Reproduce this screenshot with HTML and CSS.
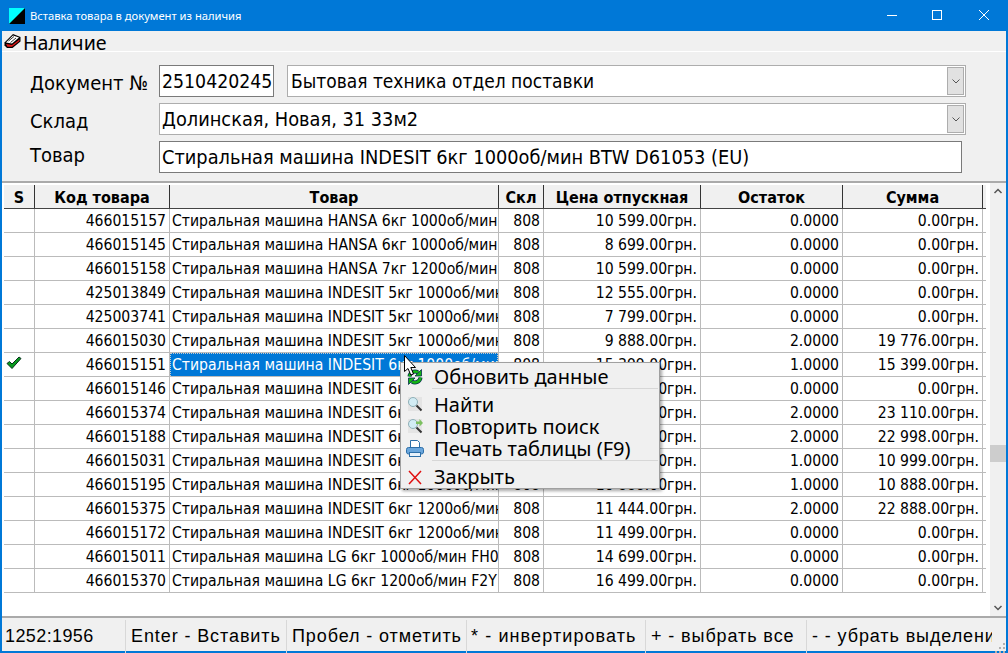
FILE: index.html
```html
<!DOCTYPE html>
<html lang="ru">
<head>
<meta charset="utf-8">
<title>Вставка товара в документ из наличия</title>
<link rel="stylesheet" href="styles.css">
</head>
<body>
<div class="window">
  <header class="titlebar">
    <svg class="app-icon" width="16" height="16" viewBox="0 0 16 16"><rect width="16" height="16" fill="#000"/><path d="M0 0H16L0 16Z" fill="#0ff"/></svg>
    <span class="title">Вставка товара в документ из наличия</span>
    <div class="controls">
      <svg width="46" height="31" viewBox="0 0 46 31"><path d="M18 15.5H28" stroke="#fff"/></svg>
      <svg width="46" height="31" viewBox="0 0 46 31"><rect x="17.5" y="10.5" width="9" height="9" fill="none" stroke="#fff"/></svg>
      <svg width="46" height="31" viewBox="0 0 46 31"><path d="M18 10L28 20M28 10L18 20" stroke="#fff"/></svg>
    </div>
  </header>
  <nav class="menubar">
    <svg width="17" height="16" viewBox="0 0 17 16"><path d="M0.5 9.5L9 1L16.5 4V8.5L8.5 15H3L0.5 12.5Z" fill="#000"/><path d="M2 9.5L9 2.5L15 4.5L8 10.5Z" fill="#fff"/><path d="M4.5 8L10 3.5M6.5 9.5L12 5" stroke="#000" stroke-width=".8"/><path d="M2 11L8 12L15.5 6.5V8L8 13.8H3.5Z" fill="#e01818"/></svg>
    <span>Наличие</span>
  </nav>
  <section class="form">
    <div class="form-row">
      <label class="form-label">Документ №</label>
      <div class="field field-num">2510420245</div>
      <div class="field combo combo-doc">Бытовая техника отдел поставки<span class="combo-btn"><svg width="8" height="5" viewBox="0 0 8 5"><path d="M0.5 0.5L4 4L7.5 0.5" fill="none" stroke="#555"/></svg></span></div>
    </div>
    <div class="form-row">
      <label class="form-label">Склад</label>
      <div class="field combo combo-store">Долинская, Новая, 31 33м2<span class="combo-btn"><svg width="8" height="5" viewBox="0 0 8 5"><path d="M0.5 0.5L4 4L7.5 0.5" fill="none" stroke="#555"/></svg></span></div>
    </div>
    <div class="form-row form-row-last">
      <label class="form-label">Товар</label>
      <div class="field field-goods">Стиральная машина INDESIT 6кг 1000об/мин BTW D61053 (EU)</div>
    </div>
  </section>
  <section class="grid-frame">
    <div class="grid">
      <div class="row head"><div>S</div><div>Код товара</div><div>Товар</div><div>Скл</div><div>Цена отпускная</div><div>Остаток</div><div>Сумма</div></div>
      <div class="row"><div></div><div>466015157</div><div>Стиральная машина HANSA 6кг 1000об/мин</div><div>808</div><div>10 599.00грн.</div><div>0.0000</div><div>0.00грн.</div></div>
      <div class="row"><div></div><div>466015145</div><div>Стиральная машина HANSA 6кг 1000об/мин</div><div>808</div><div>8 699.00грн.</div><div>0.0000</div><div>0.00грн.</div></div>
      <div class="row"><div></div><div>466015158</div><div>Стиральная машина HANSA 7кг 1200об/мин</div><div>808</div><div>10 599.00грн.</div><div>0.0000</div><div>0.00грн.</div></div>
      <div class="row"><div></div><div>425013849</div><div>Стиральная машина INDESIT 5кг 1000об/мин</div><div>808</div><div>12 555.00грн.</div><div>0.0000</div><div>0.00грн.</div></div>
      <div class="row"><div></div><div>425003741</div><div>Стиральная машина INDESIT 5кг 1000об/мин</div><div>808</div><div>7 799.00грн.</div><div>0.0000</div><div>0.00грн.</div></div>
      <div class="row"><div></div><div>466015030</div><div>Стиральная машина INDESIT 5кг 1000об/мин</div><div>808</div><div>9 888.00грн.</div><div>2.0000</div><div>19 776.00грн.</div></div>
      <div class="row selected"><div><svg class="check" width="16" height="14" viewBox="0 0 16 14"><path d="M1 7.5L3.5 5.5L6 8L13 1L15 2.5L6 12.5Z" fill="#0a9a1e" stroke="#06301c" stroke-width="1"/></svg></div><div>466015151</div><div><span class="sel">Стиральная машина INDESIT 6кг 1000об/мин</span></div><div>808</div><div>15 399.00грн.</div><div>1.0000</div><div>15 399.00грн.</div></div>
      <div class="row"><div></div><div>466015146</div><div>Стиральная машина INDESIT 6кг 1000об/мин</div><div>808</div><div>11 699.00грн.</div><div>0.0000</div><div>0.00грн.</div></div>
      <div class="row"><div></div><div>466015374</div><div>Стиральная машина INDESIT 6кг 1000об/мин</div><div>808</div><div>11 555.00грн.</div><div>2.0000</div><div>23 110.00грн.</div></div>
      <div class="row"><div></div><div>466015188</div><div>Стиральная машина INDESIT 6кг 1000об/мин</div><div>808</div><div>11 499.00грн.</div><div>2.0000</div><div>22 998.00грн.</div></div>
      <div class="row"><div></div><div>466015031</div><div>Стиральная машина INDESIT 6кг 1000об/мин</div><div>808</div><div>10 999.00грн.</div><div>1.0000</div><div>10 999.00грн.</div></div>
      <div class="row"><div></div><div>466015195</div><div>Стиральная машина INDESIT 6кг 1000об/мин</div><div>808</div><div>10 888.00грн.</div><div>1.0000</div><div>10 888.00грн.</div></div>
      <div class="row"><div></div><div>466015375</div><div>Стиральная машина INDESIT 6кг 1200об/мин</div><div>808</div><div>11 444.00грн.</div><div>2.0000</div><div>22 888.00грн.</div></div>
      <div class="row"><div></div><div>466015172</div><div>Стиральная машина INDESIT 6кг 1200об/мин</div><div>808</div><div>11 499.00грн.</div><div>0.0000</div><div>0.00грн.</div></div>
      <div class="row"><div></div><div>466015011</div><div>Стиральная машина LG 6кг 1000об/мин FH0</div><div>808</div><div>14 699.00грн.</div><div>0.0000</div><div>0.00грн.</div></div>
      <div class="row"><div></div><div>466015370</div><div>Стиральная машина LG 6кг 1200об/мин F2Y</div><div>808</div><div>16 499.00грн.</div><div>0.0000</div><div>0.00грн.</div></div>
    </div>
    <div class="scrollbar">
      <svg width="16" height="17" viewBox="0 0 16 17"><path d="M4.5 10L8 6.5L11.5 10" fill="none" stroke="#555" stroke-width="1.5"/></svg>
      <div class="track"><div class="thumb"></div></div>
      <svg width="16" height="17" viewBox="0 0 16 17"><path d="M4.5 7L8 10.5L11.5 7" fill="none" stroke="#555" stroke-width="1.5"/></svg>
    </div>
  </section>
  <footer class="statusbar">
    <div class="cell c1">1252:1956</div>
    <div class="cell c2">Enter - Вставить</div>
    <div class="cell c3">Пробел - отметить</div>
    <div class="cell c4">* - инвертировать</div>
    <div class="cell c5">+ - выбрать все</div>
    <div class="cell c6">- - убрать выделение</div>
    <svg class="grip" width="12" height="12" viewBox="0 0 12 12" fill="#b0b0b0"><rect x="9" y="1" width="2" height="2"/><rect x="5" y="5" width="2" height="2"/><rect x="9" y="5" width="2" height="2"/><rect x="1" y="9" width="2" height="2"/><rect x="5" y="9" width="2" height="2"/><rect x="9" y="9" width="2" height="2"/></svg>
  </footer>
  <div class="menu">
    <div class="item item-first"><svg width="18" height="18" viewBox="0 0 18 18"><g fill="none" stroke-linecap="butt"><path d="M3.5 8.5A5.5 5.5 0 0 1 12 4.5" stroke="#06304c" stroke-width="4"/><path d="M14.5 9.5A5.5 5.5 0 0 1 6 13.5" stroke="#06304c" stroke-width="4"/><path d="M3.5 8.5A5.5 5.5 0 0 1 12 4.5" stroke="#14b414" stroke-width="2.4"/><path d="M14.5 9.5A5.5 5.5 0 0 1 6 13.5" stroke="#14b414" stroke-width="2.4"/></g><path d="M15.5 1.5V8H9Z" fill="#14b414" stroke="#06304c" stroke-width=".8"/><path d="M2.5 16.5V10H9Z" fill="#14b414" stroke="#06304c" stroke-width=".8"/></svg><span>Обновить данные</span></div>
    <div class="sep"></div>
    <div class="item"><svg width="18" height="18" viewBox="0 0 18 18"><rect x="2" y="1" width="14" height="14" fill="#e4e4e4"/><circle cx="7" cy="6" r="4.5" fill="#d2ecf4" stroke="#8fb0b8"/><path d="M10.5 9.5L15.5 14.5" stroke="#333" stroke-width="2"/></svg><span>Найти</span></div>
    <div class="item"><svg width="18" height="18" viewBox="0 0 18 18"><rect x="2" y="1" width="14" height="14" fill="#e4e4e4"/><circle cx="7" cy="6" r="4.5" fill="#d2ecf4" stroke="#8fb0b8"/><path d="M10.5 9.5L15.5 14.5" stroke="#333" stroke-width="2"/><path d="M10 3.5H13.5V1L17 5L13.5 8.5V6H10Z" fill="#7cc060"/></svg><span>Повторить поиск</span></div>
    <div class="item"><svg width="18" height="18" viewBox="0 0 18 18"><path d="M4.5 0.5H11.5L13.5 2.5V8.5H4.5Z" fill="#fff" stroke="#2d6fa8"/><rect x="0.5" y="7.5" width="17" height="6.5" rx="2" fill="#6aa6dc" stroke="#2d6fa8"/><rect x="3.5" y="12.5" width="11" height="4" fill="#e8f2fb" stroke="#2d6fa8"/></svg><span>Печать таблицы (F9)</span></div>
    <div class="sep"></div>
    <div class="item item-last"><svg width="18" height="18" viewBox="0 0 18 18"><path d="M3 3L15 16M15 3L3 16" stroke="#e01010" stroke-width="1.5"/></svg><span>Закрыть</span></div>
  </div>
  <svg class="cursor" width="14" height="21" viewBox="0 0 14 21"><path d="M0.5 0.5V16.5L4 13.5L6.8 20L9.5 19L6.8 12.5H11.5Z" fill="#fff" stroke="#000"/></svg>
</div>
</body>
</html>
```
FILE: styles.css
```css
* { box-sizing: border-box; }
html, body { margin: 0; padding: 0; }
body { width: 1008px; height: 653px; overflow: hidden; font-family: "DejaVu Sans Condensed", "DejaVu Sans", sans-serif; color: #000; }
.window { position: relative; width: 1008px; height: 653px; background: #f0f0f0; border: 2px solid #0078d7; border-top: 0; display: flex; flex-direction: column; }
.titlebar { height: 31px; flex: none; margin: 0 -2px; background: #0078d7; color: #fff; display: flex; align-items: center; padding-left: 9px; font: 11.2px "Noto Sans", sans-serif; }
.app-icon { flex: none; margin-right: 5px; }
.title { flex: 1; }
.controls { display: flex; margin-right: 1px; }
.controls svg { display: block; }
.menubar { height: 21px; flex: none; display: flex; align-items: center; gap: 2px; padding-left: 2px; font: 19.6px/21px "Noto Sans", sans-serif; border-bottom: 1px solid #fff; overflow: hidden; }
.menubar span { position: relative; top: 1px; }
.form { height: 129px; flex: none; padding: 13px 0 0 28px; }
.form-row { display: flex; gap: 13px; height: 32px; margin-bottom: 6px; }
.form-label { width: 116px; font-size: 20px; line-height: 37px; flex: none; white-space: nowrap; }
.form-row-last .form-label { line-height: 28px; }
.field { background: #fff; border: 1px solid #adadad; height: 32px; font-size: 19.8px; line-height: 31px; padding-left: 2px; white-space: nowrap; }
.field-num { width: 115px; flex: none; border-color: #7a7a7a; font-size: 19.3px; }
.combo { flex: none; display: flex; justify-content: space-between; }
.combo-doc { width: 679px; font-size: 19px; padding-left: 3px; }
.combo-store { width: 807px; }
.field-goods { width: 803px; flex: none; border-color: #7a7a7a; }
.combo-btn { width: 17px; height: 28px; margin: 1px; background: #e1e1e1; border: 1px solid #adadad; display: flex; align-items: center; justify-content: center; }
.grid-frame { height: 437px; flex: none; border-top: 2px solid #aaa; border-bottom: 2px solid #aaa; display: flex; background: #fff; padding-left: 2px; }
.grid { width: 982px; padding-top: 2px; flex: none; }
.row { display: grid; grid-template-columns: 31px 135px 329px 45px 157px 142px 140px; height: 24px; border-bottom: 1px solid #bbb; font-size: 15.6px; line-height: 25px; }
.row > div { border-right: 1px solid #bbb; text-align: right; padding-right: 3px; overflow: hidden; white-space: nowrap; }
.row > div:nth-child(3) { text-align: left; padding: 0 0 0 2px; }
.head { background: #f0f0f0; font-weight: bold; font-size: 16px; border-bottom: 1px solid #444; }
.head > div, .head > div:nth-child(3) { text-align: center; padding: 0; border-right: 1px solid #333; }
.sel { display: block; background: #0078d7; color: #fff; margin-left: -2px; padding-left: 2px; outline: 1px dotted #ccc; outline-offset: -1px; }
.check { display: block; margin-top: 3px; margin-left: 2px; }
.scrollbar { width: 16px; margin-left: 4px; display: flex; flex-direction: column; background: #f0f0f0; }
.scrollbar svg { flex: none; display: block; }
.track { flex: 1; padding-top: 245px; }
.thumb { height: 17px; background: #cdcdcd; }
.statusbar { flex: 1; display: flex; position: relative; font: 18px "Liberation Sans", sans-serif; letter-spacing: .9px; }
.cell { border-right: 1px solid #d8d8d8; padding-left: 3px; overflow: hidden; white-space: nowrap; margin: 2px 0 1px; line-height: 33px; }
.c1 { width: 124px; letter-spacing: .4px; }
.c2 { width: 161px; padding-left: 5px; }
.c3 { width: 180px; padding-left: 5px; }
.c4 { width: 179px; padding-left: 4px; letter-spacing: 1.1px; }
.c5 { width: 161px; padding-left: 5px; }
.c6 { width: 185px; padding-left: 5px; border-right: 0; }
.grip { position: absolute; right: 0; bottom: 0; }
.menu { position: absolute; left: 398px; top: 362px; width: 260px; height: 127px; background: #f0f0f0; border: 1px solid #a0a0a0; box-shadow: 2px 2px 3px rgba(0,0,0,.35); font: 20px/22px "Noto Sans", sans-serif; padding: 2px; }
.item { display: flex; align-items: center; height: 22px; }
.item svg { flex: none; margin: 0 10px 0 3px; }
.item-first { height: 23px; }
.sep { height: 1px; background: #d7d7d7; margin: 0 -1px 5px 29px; }
.cursor { position: absolute; left: 402px; top: 355px; }
```
